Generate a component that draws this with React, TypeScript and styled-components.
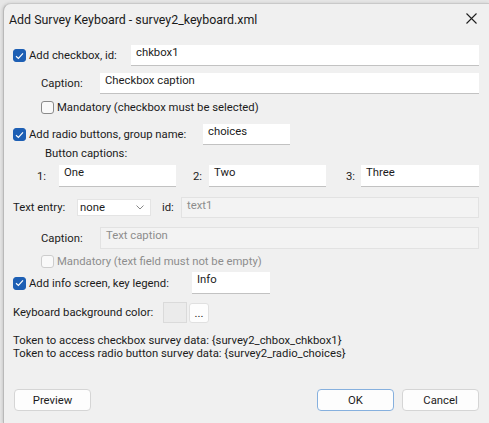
import React from "react";
import styled, { createGlobalStyle, css } from "styled-components";

const GlobalStyle = createGlobalStyle`
  html, body {
    margin: 0;
    padding: 0;
    background: #e6e6e6;
    overflow: hidden;
  }
  body {
    font-family: Roboto, "Liberation Sans", sans-serif;
    font-size: 11.3px;
    color: #1b1b1b;
  }
`;

const Desk = styled.div`
  width: 489px;
  height: 423px;
  padding: 3px 0 0 3px;
  box-sizing: border-box;
`;

const Window = styled.div`
  width: 486px;
  height: 420px;
  box-sizing: border-box;
  background: #f0f0f0;
  border-left: 1px solid #b9b9b9;
  border-top: 1px solid #c9c9c9;
  border-radius: 8px 0 0 0;
  box-shadow: -1px 0 3px rgba(0, 0, 0, 0.12);
  display: flex;
  flex-direction: column;
`;

const TitleBar = styled.div`
  height: 29px;
  display: flex;
  align-items: center;
  padding: 0 12px 0 5px;
  flex-shrink: 0;
`;

const Title = styled.div`
  flex: 1;
  font-size: 12.4px;
  color: #1a1a1a;
  padding-top: 1px;
`;

const CloseButton = styled.div`
  width: 12px;
  height: 12px;
  display: flex;
  align-items: center;
  justify-content: center;
`;

const Body = styled.div`
  flex: 1;
  display: flex;
  flex-direction: column;
  padding: 12px 10px 12px 9px;
`;

const Row = styled.div<{ $h: number; $mt?: number; $pl?: number }>`
  display: flex;
  align-items: center;
  height: ${(p) => p.$h}px;
  margin-top: ${(p) => p.$mt ?? 0}px;
  padding-left: ${(p) => p.$pl ?? 0}px;
  flex-shrink: 0;
`;

const Label = styled.span<{ $w?: number; $disabled?: boolean; $right?: number }>`
  white-space: nowrap;
  box-sizing: border-box;
  ${(p) => p.$w !== undefined && css`width: ${p.$w}px; flex-shrink: 0;`}
  ${(p) => p.$right !== undefined && css`text-align: right; padding-right: ${p.$right}px;`}
  color: ${(p) => (p.$disabled ? "#8d8d8d" : "#1b1b1b")};
`;

const Box = styled.span<{ $checked?: boolean; $disabled?: boolean }>`
  width: 13px;
  height: 13px;
  box-sizing: border-box;
  border-radius: 3px;
  margin-right: 3px;
  flex-shrink: 0;
  display: inline-flex;
  align-items: center;
  justify-content: center;
  ${(p) =>
    p.$checked
      ? css`
          background: #1d5fb4;
          border: 1px solid #1d5fb4;
        `
      : css`
          background: #f9f9f9;
          border: 1px solid ${p.$disabled ? "#cdcdcd" : "#8a8a8a"};
        `}
`;

const CheckItem = styled.label<{ $w?: number }>`
  display: flex;
  align-items: center;
  ${(p) => p.$w !== undefined && css`width: ${p.$w}px; flex-shrink: 0;`}
`;

const Field = styled.div<{ $w?: number; $h?: number; $disabled?: boolean }>`
  ${(p) => (p.$w !== undefined ? css`width: ${p.$w}px; flex-shrink: 0;` : css`flex: 1;`)}
  height: ${(p) => p.$h ?? 21}px;
  box-sizing: border-box;
  padding: 0 0 0 5px;
  line-height: 16px;
  white-space: nowrap;
  ${(p) =>
    p.$disabled
      ? css`
          background: #f3f3f3;
          border: 1px solid #e2e2e2;
          color: #8d8d8d;
        `
      : css`
          background: #ffffff;
          border-bottom: 1px solid #c2c2c2;
          color: #1b1b1b;
        `}
`;

const Select = styled.div`
  width: 74px;
  height: 17px;
  box-sizing: border-box;
  background: #ffffff;
  border: 1px solid #e4e4e4;
  display: flex;
  align-items: center;
  justify-content: space-between;
  padding: 0 6px 0 2px;
  margin-left: 1px;
`;

const Swatch = styled.div`
  width: 24px;
  height: 21px;
  box-sizing: border-box;
  background: #ebebeb;
  border: 1px solid #dadada;
`;

const DotsButton = styled.div`
  width: 20px;
  height: 20px;
  margin-left: 2px;
  box-sizing: border-box;
  background: #fdfdfd;
  border: 1px solid #e0e0e0;
  border-radius: 3px;
  display: flex;
  align-items: flex-end;
  justify-content: center;
  padding-bottom: 3px;
  line-height: 10px;
`;

const Tokens = styled.div`
  margin-top: 11px;
  line-height: 13px;
  white-space: nowrap;
`;

const Footer = styled.div`
  margin-top: auto;
  display: flex;
  align-items: center;
  padding-left: 1px;
`;

const Button = styled.div<{ $primary?: boolean }>`
  width: 77px;
  height: 22px;
  box-sizing: border-box;
  background: #fdfdfd;
  border: 1px solid ${(p) => (p.$primary ? "#86b0de" : "#d5d5d5")};
  border-radius: 4px;
  display: flex;
  align-items: center;
  justify-content: center;
  & + & {
    margin-left: 8px;
  }
`;

const Spacer = styled.div`
  flex: 1;
`;

const Check = () => (
  <svg width="9" height="8" viewBox="0 0 9 8">
    <path d="M1 4.2 L3.4 6.4 L8 1.4" fill="none" stroke="#ffffff" strokeWidth="1.2" />
  </svg>
);

const CheckBox = ({ checked, disabled }: { checked?: boolean; disabled?: boolean }) => (
  <Box $checked={checked} $disabled={disabled}>{checked && <Check />}</Box>
);

const Chevron = () => (
  <svg width="8" height="5" viewBox="0 0 8 5">
    <path d="M0.5 0.5 L4 4 L7.5 0.5" fill="none" stroke="#7a7a7a" strokeWidth="0.9" />
  </svg>
);

const CloseIcon = () => (
  <svg width="11" height="11" viewBox="0 0 11 11">
    <path d="M0.5 0.5 L10.5 10.5 M10.5 0.5 L0.5 10.5" stroke="#1f1f1f" strokeWidth="1.1" />
  </svg>
);

export default function App() {
  return (
    <Desk>
      <GlobalStyle />
      <Window>
        <TitleBar>
          <Title>Add Survey Keyboard - survey2_keyboard.xml</Title>
          <CloseButton>
            <CloseIcon />
          </CloseButton>
        </TitleBar>
        <Body>
          <Row $h={21}>
            <CheckItem $w={118}>
              <CheckBox checked />
              <Label>Add checkbox, id:</Label>
            </CheckItem>
            <Field>chkbox1</Field>
          </Row>
          <Row $h={21} $mt={7} $pl={28}>
            <Label $w={59}>Caption:</Label>
            <Field>Checkbox caption</Field>
          </Row>
          <Row $h={14} $mt={6} $pl={28}>
            <CheckItem>
              <CheckBox />
              <Label>Mandatory (checkbox must be selected)</Label>
            </CheckItem>
          </Row>
          <Row $h={21} $mt={10}>
            <CheckItem $w={190}>
              <CheckBox checked />
              <Label>Add radio buttons, group name:</Label>
            </CheckItem>
            <Field $w={87}>choices</Field>
          </Row>
          <Row $h={14} $mt={1} $pl={32}>
            <Label>Button captions:</Label>
          </Row>
          <Row $h={22} $mt={5} $pl={24}>
            <Label $w={22}>1:</Label>
            <Field $w={117} $h={22}>One</Field>
            <Label $w={33} $right={7}>2:</Label>
            <Field $w={117} $h={22}>Two</Field>
            <Label $w={35} $right={6}>3:</Label>
            <Field $h={22}>Three</Field>
          </Row>
          <Row $h={21} $mt={10}>
            <Label $w={63}>Text entry:</Label>
            <Select>
              <span>none</span>
              <Chevron />
            </Select>
            <Label $w={30} style={{ paddingLeft: 11 }}>id:</Label>
            <Field $disabled>text1</Field>
          </Row>
          <Row $h={22} $mt={9} $pl={28}>
            <Label $w={59}>Caption:</Label>
            <Field $disabled $h={22}>Text caption</Field>
          </Row>
          <Row $h={13} $mt={6} $pl={28}>
            <CheckItem>
              <CheckBox disabled />
              <Label $disabled>Mandatory (text field must not be empty)</Label>
            </CheckItem>
          </Row>
          <Row $h={22} $mt={4}>
            <CheckItem $w={179}>
              <CheckBox checked />
              <Label>Add info screen, key legend:</Label>
            </CheckItem>
            <Field $w={78} $h={22}>Info</Field>
          </Row>
          <Row $h={21} $mt={8}>
            <Label $w={150}>Keyboard background color:</Label>
            <Swatch />
            <DotsButton>...</DotsButton>
          </Row>
          <Tokens>
            <div>Token to access checkbox survey data: {"{survey2_chbox_chkbox1}"}</div>
            <div>Token to access radio button survey data: {"{survey2_radio_choices}"}</div>
          </Tokens>
          <Footer>
            <Button>Preview</Button>
            <Spacer />
            <Button $primary>OK</Button>
            <Button>Cancel</Button>
          </Footer>
        </Body>
      </Window>
    </Desk>
  );
}
